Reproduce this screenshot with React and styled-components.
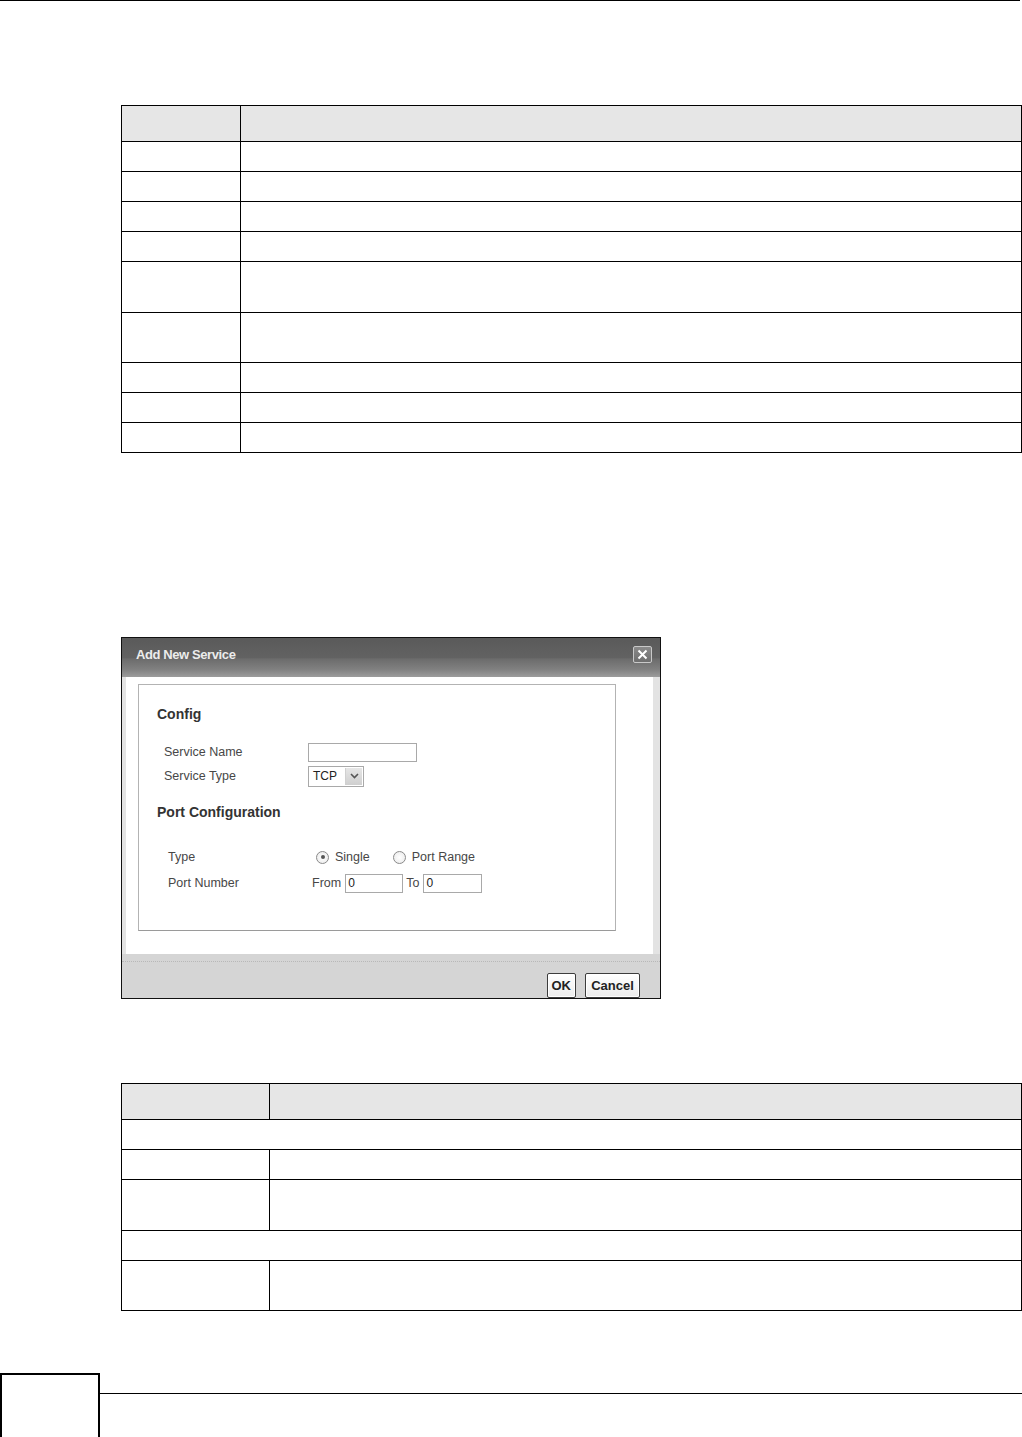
import styled, { createGlobalStyle } from "styled-components";

const GlobalStyle = createGlobalStyle`
  html, body {
    margin: 0;
    padding: 0;
    background: #fff;
  }
  body {
    font-family: "Liberation Sans", Arial, sans-serif;
  }
`;

const Page = styled.div`
  width: 1022px;
  height: 1437px;
  overflow: hidden;
  display: flex;
  flex-direction: column;
`;

const TopRule = styled.div`
  width: 1020px;
  border-top: 1px solid #000;
`;

const Table = styled.table`
  margin-left: 121px;
  margin-top: ${({ $top }) => $top}px;
  width: 900px;
  border-collapse: collapse;
  table-layout: fixed;
  td, th {
    border: 1px solid #000;
    padding: 0;
  }
  th {
    background: #e6e6e6;
    height: 35px;
  }
  td {
    height: 29px;
  }
  tr.tall td {
    height: 50px;
  }
  tr.tall2 td {
    height: 49px;
  }
`;

const Col = styled.col`
  width: ${({ $w }) => $w}px;
`;

/* dialog */
const Dialog = styled.div`
  margin-left: 121px;
  margin-top: ${({ $top }) => $top}px;
  width: 538px;
  height: 361px;
  border: 1px solid #111;
  display: flex;
  flex-direction: column;
  background: #d5d5d5;
`;

const TitleBar = styled.div`
  height: 39px;
  display: flex;
  align-items: flex-start;
  justify-content: space-between;
  padding: 0 8px 0 14px;
  background: linear-gradient(
    #5a5a5a 0%,
    #626262 50%,
    #6c6c6c 54%,
    #808080 80%,
    #9c9c9c 100%
  );
`;

const Title = styled.span`
  margin-top: 9px;
  color: #ececec;
  font-size: 13px;
  font-weight: bold;
  letter-spacing: -0.4px;
`;

const CloseBtn = styled.button`
  margin-top: 8px;
  width: 19px;
  height: 17px;
  padding: 0;
  border: 1px solid #c9c9c9;
  border-radius: 2px;
  background: linear-gradient(#8a8a8a, #6e6e6e);
  display: flex;
  align-items: center;
  justify-content: center;
`;

const BodyFrame = styled.div`
  height: 277px;
  background: #e3e3e3;
  padding: 0 7px 0 4px;
  display: flex;
`;

const WhitePanel = styled.div`
  flex: 1;
  background: #fff;
  padding: 7px 37px 0 12px;
`;

const FieldBox = styled.div`
  height: 245px;
  border: 1px solid #b3b3b3;
  border-bottom-color: #9a9a9a;
  display: flex;
  flex-direction: column;
  padding: 0 0 0 18px;
`;

const SectionTitle = styled.div`
  font-size: 14px;
  font-weight: bold;
  color: #333;
  height: 18px;
  line-height: 18px;
  margin-top: ${({ $top }) => $top}px;
`;

const FormGrid = styled.div`
  display: grid;
  grid-template-columns: ${({ $label }) => $label}px 1fr;
  grid-auto-rows: ${({ $row }) => $row}px;
  margin-top: ${({ $top }) => $top}px;
  padding-left: ${({ $indent }) => $indent}px;
  font-size: 12.5px;
  color: #474747;
  align-items: center;
`;

const Control = styled.div`
  display: flex;
  align-items: center;
  padding-left: ${({ $pl }) => $pl || 0}px;
`;

const TextBox = styled.div`
  width: ${({ $w }) => $w}px;
  height: 17px;
  border: 1px solid #a9a9a9;
  background: #fff;
  font-size: 12px;
  line-height: 17px;
  padding-left: 2px;
  color: #222;
  box-sizing: content-box;
`;

const Select = styled.div`
  width: 56px;
  height: 21px;
  border: 1px solid #a9a9a9;
  display: flex;
  align-items: center;
  justify-content: space-between;
  font-size: 12px;
  color: #222;
  padding-left: 4px;
  box-sizing: border-box;
`;

const SelectArrow = styled.span`
  width: 16px;
  height: 17px;
  margin-right: 1px;
  background: linear-gradient(#e6e6e6, #cfcfcf);
  border-left: 1px solid #d0d0d0;
  display: flex;
  align-items: center;
  justify-content: center;
`;

const Radio = styled.span`
  width: 11px;
  height: 11px;
  border: 1px solid #8a8a8a;
  border-radius: 50%;
  background: radial-gradient(#fff, #e8e8e8);
  display: inline-flex;
  align-items: center;
  justify-content: center;
  margin-right: 6px;
  &::after {
    content: "";
    width: 4px;
    height: 4px;
    border-radius: 50%;
    background: ${({ $on }) => ($on ? "#555" : "transparent")};
  }
`;

const RadioLabel = styled.label`
  display: inline-flex;
  align-items: center;
  margin-right: ${({ $mr }) => $mr || 0}px;
  color: #474747;
`;

const Small = styled.span`
  margin-right: 4px;
  margin-left: ${({ $ml }) => $ml || 0}px;
`;

const Footer = styled.div`
  flex: 1;
  border-top: 7px solid #d5d5d5;
  position: relative;
  display: flex;
  justify-content: flex-end;
  align-items: flex-start;
  padding: 12px 20px 0 0;
  &::before {
    content: "";
    position: absolute;
    left: 0;
    right: 0;
    top: 0;
    border-top: 1px dotted #b8b8b8;
  }
`;

const Btn = styled.button`
  height: 25px;
  min-width: ${({ $w }) => $w}px;
  margin-left: ${({ $ml }) => $ml || 0}px;
  padding: 0 4px;
  border: 1px solid #3c3c3c;
  border-radius: 2px;
  background: linear-gradient(#ffffff, #ececec);
  box-shadow: inset 0 0 0 1px #fff;
  font-family: "Liberation Sans", Arial, sans-serif;
  font-size: 13px;
  font-weight: bold;
  color: #222;
`;

/* page footer */
const PageFoot = styled.div`
  margin-top: ${({ $top }) => $top}px;
  display: flex;
  align-items: flex-start;
`;

const PageNumBox = styled.div`
  width: 96px;
  height: 62px;
  border: 2px solid #000;
`;

const FootRule = styled.div`
  flex: 1;
  margin-top: 20px;
  border-top: 1px solid #000;
`;

const table1Rows = ["", "", "", "", "tall", "tall2", "", "", ""];

function CloseIcon() {
  return (
    <svg width="11" height="11" viewBox="0 0 11 11">
      <path d="M1.5 1.5 L9.5 9.5 M9.5 1.5 L1.5 9.5" stroke="#fff" strokeWidth="2" />
    </svg>
  );
}

function Chevron() {
  return (
    <svg width="9" height="6" viewBox="0 0 9 6">
      <path d="M1 1 L4.5 4.5 L8 1" stroke="#555" strokeWidth="1.6" fill="none" />
    </svg>
  );
}

export default function App() {
  return (
    <>
      <GlobalStyle />
      <Page>
        <TopRule />

        <Table $top={104}>
          <colgroup>
            <Col $w={119} />
            <Col $w={781} />
          </colgroup>
          <thead>
            <tr>
              <th />
              <th />
            </tr>
          </thead>
          <tbody>
            {table1Rows.map((cls, i) => (
              <tr key={i} className={cls || undefined}>
                <td />
                <td />
              </tr>
            ))}
          </tbody>
        </Table>

        <Dialog $top={184}>
          <TitleBar>
            <Title>Add New Service</Title>
            <CloseBtn aria-label="close">
              <CloseIcon />
            </CloseBtn>
          </TitleBar>
          <BodyFrame>
            <WhitePanel>
              <FieldBox>
                <SectionTitle $top={20}>Config</SectionTitle>
                <FormGrid $label={144} $row={24} $top={17} $indent={7}>
                  <span>Service Name</span>
                  <Control>
                    <TextBox $w={105} />
                  </Control>
                  <span>Service Type</span>
                  <Control>
                    <Select>
                      TCP
                      <SelectArrow>
                        <Chevron />
                      </SelectArrow>
                    </Select>
                  </Control>
                </FormGrid>
                <SectionTitle $top={15}>Port Configuration</SectionTitle>
                <FormGrid $label={144} $row={26} $top={23} $indent={11}>
                  <span>Type</span>
                  <Control $pl={4}>
                    <RadioLabel $mr={23}>
                      <Radio $on />
                      Single
                    </RadioLabel>
                    <RadioLabel>
                      <Radio />
                      Port Range
                    </RadioLabel>
                  </Control>
                  <span>Port Number</span>
                  <Control>
                    <Small>From</Small>
                    <TextBox $w={54}>0</TextBox>
                    <Small $ml={3}>To</Small>
                    <TextBox $w={55}>0</TextBox>
                  </Control>
                </FormGrid>
              </FieldBox>
            </WhitePanel>
          </BodyFrame>
          <Footer>
            <Btn $w={26}>OK</Btn>
            <Btn $w={55} $ml={9}>Cancel</Btn>
          </Footer>
        </Dialog>

        <Table $top={84}>
          <colgroup>
            <Col $w={148} />
            <Col $w={752} />
          </colgroup>
          <thead>
            <tr>
              <th />
              <th />
            </tr>
          </thead>
          <tbody>
            <tr>
              <td colSpan={2} />
            </tr>
            <tr>
              <td />
              <td />
            </tr>
            <tr className="tall">
              <td />
              <td />
            </tr>
            <tr>
              <td colSpan={2} />
            </tr>
            <tr className="tall2">
              <td />
              <td />
            </tr>
          </tbody>
        </Table>

        <PageFoot $top={62}>
          <PageNumBox />
          <FootRule />
        </PageFoot>
      </Page>
    </>
  );
}
